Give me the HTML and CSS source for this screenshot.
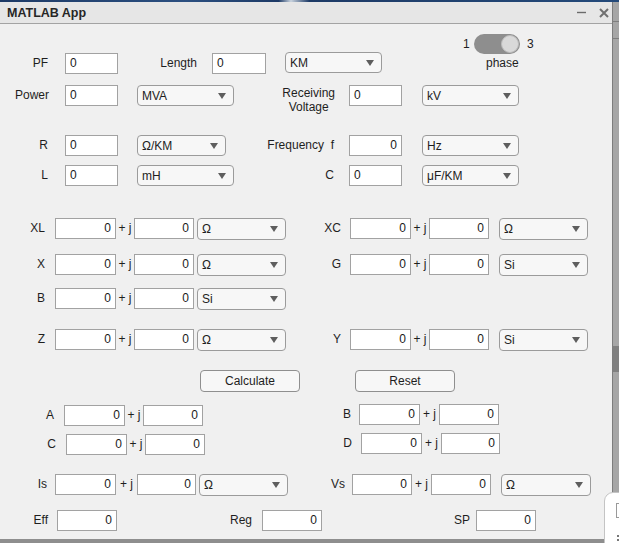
FILE: index.html
```html
<!DOCTYPE html>
<html>
<head>
<meta charset="utf-8">
<title>MATLAB App</title>
<link rel="stylesheet" href="styles.css">
</head>
<body>
<div class="topstrip"></div>
<div class="screen">
  <div class="window">
    <div class="titlebar">
      <span class="title">MATLAB App</span>
      <div class="wbtns">
        <svg class="wmin" width="9" height="9" viewBox="0 0 9 9"><line x1="0" y1="4.5" x2="9" y2="4.5" stroke="#6b6b6b" stroke-width="1.4"/></svg>
        <svg class="wclose" width="10" height="10" viewBox="0 0 10 10"><path d="M1 1L9 9M9 1L1 9" stroke="#707070" stroke-width="2"/></svg>
      </div>
    </div>
    <div class="content">
      <div class="row r1">
        <div class="lb w65 pr17">PF</div>
        <div class="fd w53">0</div>
        <div class="lb w94 pr15">Length</div>
        <div class="fd w54">0</div>
        <div class="dd w97 ml19 up2"><span>KM</span><i class="arr"></i></div>
        <div class="sw">
          <div class="sw-top"><span class="sw-n">1</span><div class="tog"><div class="knob"></div></div><span class="sw-n3">3</span></div>
          <div class="sw-cap">phase</div>
        </div>
      </div>

      <div class="row r2">
        <div class="lb w65 pr16">Power</div>
        <div class="fd w53">0</div>
        <div class="dd w97 ml19"><span>MVA</span><i class="arr"></i></div>
        <div class="lb2 w115 pr14"><span>Receiving<br>Voltage</span></div>
        <div class="fd w53">0</div>
        <div class="dd w97 ml20"><span>kV</span><i class="arr"></i></div>
      </div>

      <div class="row r3">
        <div class="lb w65 pr17">R</div>
        <div class="fd w53">0</div>
        <div class="dd w89 ml19"><span>Ω/KM</span><i class="arr"></i></div>
        <div class="lb w123 pr15">Frequency  f</div>
        <div class="fd w53 ra">0</div>
        <div class="dd w97 ml20"><span>Hz</span><i class="arr"></i></div>
      </div>

      <div class="row r4">
        <div class="lb w65 pr17">L</div>
        <div class="fd w53">0</div>
        <div class="dd w97 ml19"><span>mH</span><i class="arr"></i></div>
        <div class="lb w115 pr15">C</div>
        <div class="fd w53">0</div>
        <div class="dd w97 ml20"><span>μF/KM</span><i class="arr"></i></div>
      </div>

      <div class="row h22 rxl">
        <div class="lb w55 pr10">XL</div>
        <div class="fd w61 ra">0</div>
        <div class="pj w18">+ j</div>
        <div class="fd w60 ra">0</div>
        <div class="dd w89 ml3 tall"><span>Ω</span><i class="arr"></i></div>
        <div class="lb w64 pr9">XC</div>
        <div class="fd w61 ra">0</div>
        <div class="pj w18">+ j</div>
        <div class="fd w60 ra">0</div>
        <div class="dd w89 ml10 tall"><span>Ω</span><i class="arr"></i></div>
      </div>

      <div class="row h22 rx">
        <div class="lb w55 pr10">X</div>
        <div class="fd w61 ra">0</div>
        <div class="pj w18">+ j</div>
        <div class="fd w60 ra">0</div>
        <div class="dd w89 ml3 tall"><span>Ω</span><i class="arr"></i></div>
        <div class="lb w64 pr9">G</div>
        <div class="fd w61 ra">0</div>
        <div class="pj w18">+ j</div>
        <div class="fd w60 ra">0</div>
        <div class="dd w89 ml10 tall"><span>Si</span><i class="arr"></i></div>
      </div>

      <div class="row h22 rb">
        <div class="lb w55 pr10">B</div>
        <div class="fd w61 ra">0</div>
        <div class="pj w18">+ j</div>
        <div class="fd w60 ra">0</div>
        <div class="dd w89 ml3 tall"><span>Si</span><i class="arr"></i></div>
      </div>

      <div class="row h22 rz">
        <div class="lb w55 pr10">Z</div>
        <div class="fd w61 ra">0</div>
        <div class="pj w18">+ j</div>
        <div class="fd w60 ra">0</div>
        <div class="dd w89 ml3 tall"><span>Ω</span><i class="arr"></i></div>
        <div class="lb w64 pr9">Y</div>
        <div class="fd w61 ra">0</div>
        <div class="pj w18">+ j</div>
        <div class="fd w60 ra">0</div>
        <div class="dd w89 ml10 tall"><span>Si</span><i class="arr"></i></div>
      </div>

      <div class="row h22 rbtn">
        <div class="btn ml200">Calculate</div>
        <div class="btn ml55">Reset</div>
      </div>

      <div class="row h22 rab">
        <div class="grp mt1">
          <div class="lb w64 pr10">A</div>
          <div class="fd w61 ra">0</div>
          <div class="pj w18">+ j</div>
          <div class="fd w60 ra">0</div>
        </div>
        <div class="grp">
          <div class="lb w156 pr8">B</div>
          <div class="fd w61 ra">0</div>
          <div class="pj w19">+ j</div>
          <div class="fd w60 ra">0</div>
        </div>
      </div>

      <div class="row h22 rcd">
        <div class="grp mt1">
          <div class="lb w66 pr10">C</div>
          <div class="fd w61 ra">0</div>
          <div class="pj w18">+ j</div>
          <div class="fd w60 ra">0</div>
        </div>
        <div class="grp">
          <div class="lb w156 pr9">D</div>
          <div class="fd w61 ra">0</div>
          <div class="pj w19">+ j</div>
          <div class="fd w59 ra">0</div>
        </div>
      </div>

      <div class="row h22 ris">
        <div class="lb w55 pr8">Is</div>
        <div class="fd w61 ra">0</div>
        <div class="pj w21">+ j</div>
        <div class="fd w59 ra">0</div>
        <div class="dd w89 ml3 tall"><span>Ω</span><i class="arr"></i></div>
        <div class="lb w64 pr7">Vs</div>
        <div class="fd w60 ra">0</div>
        <div class="pj w19">+ j</div>
        <div class="fd w60 ra">0</div>
        <div class="dd w90 ml10 tall"><span>Ω</span><i class="arr"></i></div>
      </div>

      <div class="row reff">
        <div class="lb w57 pr9">Eff</div>
        <div class="fd w60 ra">0</div>
        <div class="lb w145 pr10">Reg</div>
        <div class="fd w60 ra">0</div>
        <div class="lb w154 pr6">SP</div>
        <div class="fd w60 ra">0</div>
      </div>
    </div>
  </div>
  <div class="side"></div>
</div>
<div class="card"><div class="card-ico"></div><div class="card-dot d1"></div><div class="card-dot d2"></div></div>
</body>
</html>
```

FILE: styles.css
```css
* { box-sizing: border-box; }
html, body { margin: 0; padding: 0; }
body {
  width: 619px;
  height: 543px;
  overflow: hidden;
  position: relative;
  background: #8e8e8e;
  font-family: "Liberation Sans", Arial, sans-serif;
  font-size: 12px;
  color: #1e1e1e;
}
.topstrip {
  height: 2px;
  background: linear-gradient(90deg, #1d3a66 0%, #2b4f80 30%, #1d3a66 45%, #c9d3de 47%, #1d3a66 50%, #244a7a 100%);
}
.screen { display: flex; }
.window {
  width: 613px;
  height: 537px;
  background: #f0f0f0;
  border-right: 1px solid #7d7d7d;
  flex: none;
}
.side {
  flex: 1;
  height: 537px;
  background: linear-gradient(180deg, #a6a6a6 0, #a6a6a6 19px, #7e7e7e 19px, #7e7e7e 20px, #a6a6a6 20px, #a6a6a6 36px, #7e7e7e 36px, #7e7e7e 37px, #a6a6a6 37px, #a6a6a6 344px, #808080 344px, #808080 370px, #a6a6a6 370px);
}
.titlebar {
  height: 22px;
  background: #e6e6e6;
  border-bottom: 1px solid #a3a3a3;
  display: flex;
  align-items: center;
  padding: 0 3px 0 7px;
}
.title { font-weight: bold; font-size: 12.5px; color: #262626; }
.wbtns { margin-left: auto; display: flex; align-items: center; }
.wmin { display: block; }
.wclose { display: block; margin-left: 13px; margin-top: 1px; }

.content { display: flex; flex-direction: column; }
.row { display: flex; align-items: flex-start; height: 21px; flex: none; }
.row.h22 { height: 22px; }
.r1 { margin-top: 29px; }
.r2 { margin-top: 11px; }
.r3 { margin-top: 29px; }
.r4 { margin-top: 9px; }
.rxl { margin-top: 32px; }
.rx { margin-top: 14px; }
.rb { margin-top: 12px; }
.rz { margin-top: 19px; }
.rbtn { margin-top: 19px; }
.rab { margin-top: 12px; }
.rcd { margin-top: 7px; }
.ris { margin-top: 19px; }
.reff { margin-top: 14px; }

.grp { display: flex; align-items: flex-start; }
.mt1 { margin-top: 1px; }

.lb {
  flex: none;
  height: 21px;
  line-height: 21px;
  text-align: right;
  white-space: pre;
}
.lb2 {
  flex: none;
  display: flex;
  justify-content: flex-end;
  line-height: 14px;
  margin-top: 1px;
}
.lb2 span { text-align: center; }

.fd {
  flex: none;
  height: 21px;
  background: #fff;
  border: 1px solid #a2a2a2;
  padding: 0 4px;
  line-height: 19px;
  color: #1a1a1a;
}
.ra { text-align: right; }

.pj { flex: none; height: 21px; line-height: 21px; text-align: center; }

.dd {
  flex: none;
  height: 21px;
  border: 1px solid #9b9b9b;
  border-radius: 4px;
  background: #f7f7f7;
  display: flex;
  align-items: center;
  padding: 0 7px 0 4px;
}
.dd.tall { height: 22px; }
.dd.up2 { margin-top: -1px; }
.dd .arr {
  margin-left: auto;
  width: 0;
  height: 0;
  border-left: 4px solid transparent;
  border-right: 4px solid transparent;
  border-top: 6px solid #5e5e5e;
}

.btn {
  flex: none;
  width: 100px;
  height: 22px;
  border: 1px solid #8f8f8f;
  border-radius: 4px;
  background: #f7f7f7;
  display: flex;
  align-items: center;
  justify-content: center;
}

.sw { flex: none; margin-left: 81px; margin-top: -19px; }
.sw-top { display: flex; align-items: center; height: 20px; }
.sw-n { width: 7px; }
.tog {
  margin-left: 4px;
  width: 46px;
  height: 20px;
  border-radius: 10px;
  background: #8e8e8e;
  display: flex;
  justify-content: flex-end;
  align-items: center;
  padding-right: 1px;
}
.knob {
  width: 18px;
  height: 18px;
  border-radius: 50%;
  background: #d9d9d9;
  border: 1px solid #bcbcbc;
}
.sw-n3 { margin-left: 7px; }
.sw-cap { margin-left: 23px; margin-top: 2px; line-height: 14px; }

.card {
  position: absolute;
  left: 604px;
  top: 492px;
  width: 30px;
  height: 60px;
  background: #fff;
  border: 1px solid #c4c4c4;
  border-radius: 9px 0 0 0;
}
.card-ico {
  position: absolute;
  left: 11px;
  top: 10px;
  width: 8px;
  height: 15px;
  border: 1px solid #9a9a9a;
}
.card-dot {
  position: absolute;
  left: 12px;
  width: 2px;
  height: 2px;
  background: #777;
}
.d1 { top: 42px; }
.d2 { top: 46px; }

.w53 { width: 53px; } .w54 { width: 54px; } .w55 { width: 55px; } .w57 { width: 57px; }
.w59 { width: 59px; } .w60 { width: 60px; } .w61 { width: 61px; } .w64 { width: 64px; }
.w65 { width: 65px; } .w66 { width: 66px; } .w89 { width: 89px; } .w90 { width: 90px; }
.w94 { width: 94px; } .w97 { width: 97px; } .w115 { width: 115px; } .w123 { width: 123px; }
.w145 { width: 145px; } .w154 { width: 154px; } .w156 { width: 156px; }
.w18 { width: 18px; } .w19 { width: 19px; } .w21 { width: 21px; }
.pr6 { padding-right: 6px; } .pr7 { padding-right: 7px; } .pr8 { padding-right: 8px; }
.pr9 { padding-right: 9px; } .pr10 { padding-right: 10px; } .pr14 { padding-right: 14px; }
.pr15 { padding-right: 15px; } .pr16 { padding-right: 16px; } .pr17 { padding-right: 17px; }
.ml3 { margin-left: 3px; } .ml10 { margin-left: 10px; } .ml19 { margin-left: 19px; }
.ml20 { margin-left: 20px; } .ml55 { margin-left: 55px; } .ml200 { margin-left: 200px; }
```
